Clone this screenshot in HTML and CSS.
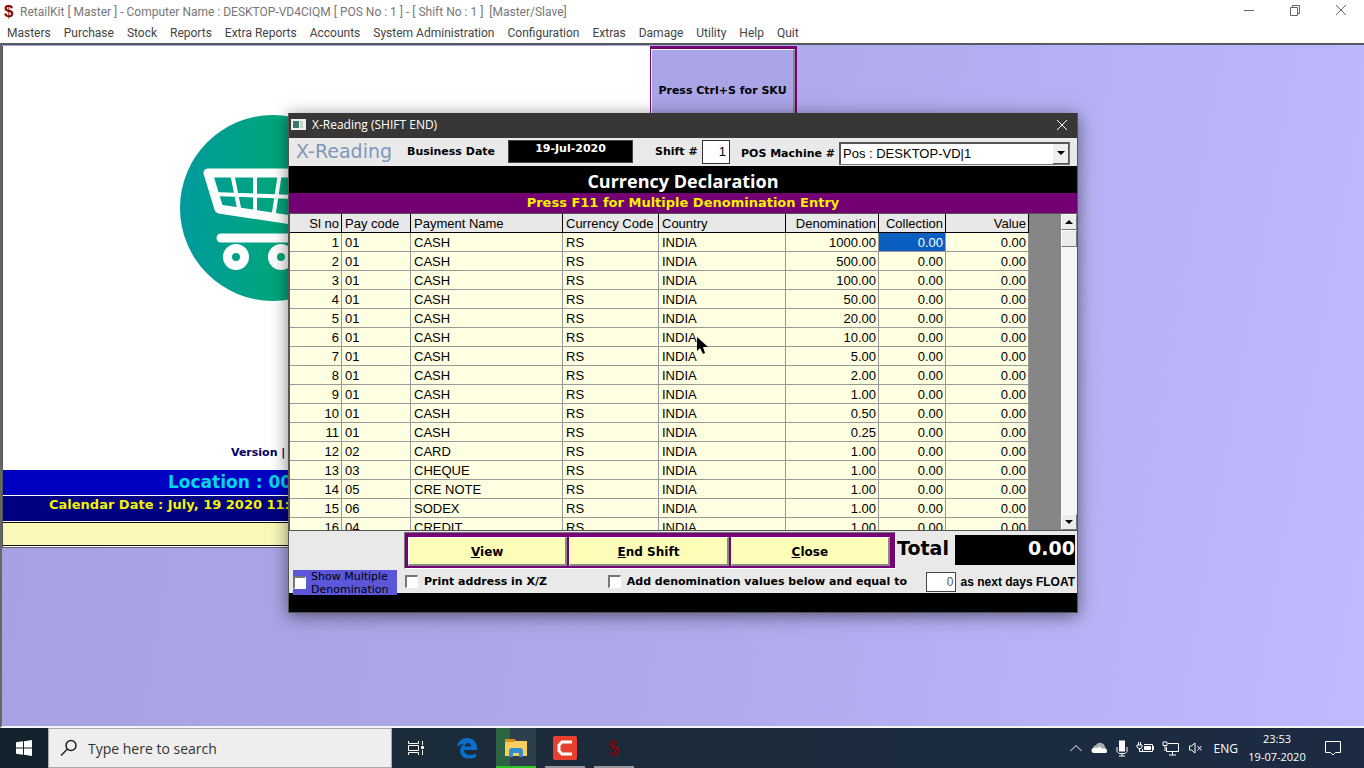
FILE: index.html
```
<!DOCTYPE html>
<html lang="en">
<head>
<meta charset="UTF-8">
<meta name="viewport" content="width=device-width, initial-scale=1.0">
<title>RetailKit</title>
<link rel="stylesheet" href="styles.css">
</head>
<body>
    <header class="app-title">
        <span class="app-icon">$</span>
        <span class="app-name">RetailKit [ Master ] - Computer Name : DESKTOP-VD4CIQM [ POS No : 1 ] - [ Shift No : 1 ]&nbsp; [Master/Slave]</span>
        <div class="window-buttons">
            <button type="button" aria-label="Minimize"><svg width="12" height="12" viewBox="0 0 12 12"><path d="M1 6.5h10"/></svg></button>
            <button type="button" aria-label="Restore"><svg width="12" height="12" viewBox="0 0 12 12"><path d="M1.500 3.500h7v8h-7zM3.500 3.500v-2h7v8h-2"/></svg></button>
            <button type="button" aria-label="Close"><svg width="12" height="12" viewBox="0 0 12 12"><path d="M1 1l10 10M11 1L1 11"/></svg></button>
        </div>
    </header>

    <nav class="menu">
        <a href="#">Masters</a>
        <a href="#">Purchase</a>
        <a href="#">Stock</a>
        <a href="#">Reports</a>
        <a href="#">Extra Reports</a>
        <a href="#">Accounts</a>
        <a href="#">System Administration</a>
        <a href="#">Configuration</a>
        <a href="#">Extras</a>
        <a href="#">Damage</a>
        <a href="#">Utility</a>
        <a href="#">Help</a>
        <a href="#">Quit</a>
    </nav>

    <main class="workspace">
        <div class="backdrop">
            <section class="splash">
                <div class="splash-logo">
                    <svg width="186" height="186" viewBox="0 0 186 186">
                        <defs>
                            <linearGradient id="disc" x1="0" x2="1" y1="0" y2="0">
                                <stop offset="0" stop-color="#009a9e"/>
                                <stop offset="0.5" stop-color="#00a57d"/>
                                <stop offset="1" stop-color="#00a878"/>
                            </linearGradient>
                        </defs>
                        <circle cx="93" cy="93" r="93" fill="url(#disc)"/>
                        <path d="M28 58h118l-8 51L39 94z" fill="none" stroke="#fff" stroke-width="9" stroke-linejoin="round"/>
                        <path d="M33 79l108 4M52 58l8 40M75 58v42M100 58l-7 46M124 58l-8 48" fill="none" stroke="#fff" stroke-width="4"/>
                        <path d="M41 123h90" stroke="#fff" stroke-width="9" stroke-linecap="round"/>
                        <g fill="none" stroke="#fff" stroke-width="9">
                            <circle cx="56" cy="142" r="8.500"/>
                            <circle cx="101" cy="142" r="8.500"/>
                        </g>
                    </svg>
                </div>
                <p class="version">Version |</p>
                <p class="location">Location : 00</p>
                <p class="calendar">Calendar Date : July, 19 2020 11:</p>
                <div class="notice"></div>
            </section>
            <div class="sku-panel">
                <button type="button" class="sku">Press Ctrl+S for SKU</button>
            </div>
        </div>

        <section class="dialog">
            <header class="dialog-title">
                <svg width="15" height="11" viewBox="0 0 15 11"><path fill="#eef1f1" d="M0 0h15v11H0z"/><path fill="#3a756e" d="M2 2h6v7H2z"/><path fill="#bcd3c4" d="M9 2h3v7H9z"/></svg>
                <h1>X-Reading (SHIFT END)</h1>
                <button type="button" aria-label="Close"><svg width="12" height="12" viewBox="0 0 12 12"><path d="M1 1l10 10M11 1L1 11"/></svg></button>
            </header>

            <div class="reading">
                <h2>X-Reading</h2>
                <span class="caption">Business Date</span>
                <output class="date">19-Jul-2020</output>
                <label class="caption" for="shift">Shift #</label>
                <input type="text" id="shift" value="1">
                <label class="caption pos-label" for="pos">POS Machine #</label>
                <div class="combo">
                    <select id="pos">
                        <option>Pos : DESKTOP-VD|1</option>
                    </select>
                    <span class="arrow down"></span>
                </div>
            </div>

            <h2 class="declaration">Currency Declaration</h2>
            <p class="hint">Press F11 for Multiple Denomination Entry</p>

            <div class="grid">
                <table>
                    <colgroup>
                        <col class="c-no"><col class="c-pay"><col class="c-name"><col class="c-cur"><col class="c-country"><col class="c-den"><col class="c-col"><col class="c-val">
                    </colgroup>
                    <thead>
                        <tr>
                            <th class="num">Sl no</th>
                            <th>Pay code</th>
                            <th>Payment Name</th>
                            <th>Currency Code</th>
                            <th>Country</th>
                            <th class="num">Denomination</th>
                            <th class="num">Collection</th>
                            <th class="num">Value</th>
                        </tr>
                    </thead>
                    <tbody id="rows"></tbody>
                </table>
                <div class="scrollbar">
                    <button type="button" aria-label="Scroll up"><span class="arrow up"></span></button>
                    <div class="thumb"></div>
                    <button type="button" class="scroll-end" aria-label="Scroll down"><span class="arrow down"></span></button>
                </div>
            </div>

            <div class="actions">
                <div class="buttons">
                    <button type="button"><u>V</u>iew</button>
                    <button type="button"><u>E</u>nd Shift</button>
                    <button type="button"><u>C</u>lose</button>
                </div>
                <span class="total-label">Total</span>
                <output class="total">0.00</output>
            </div>

            <div class="options">
                <label class="multiple"><input type="checkbox"><span>Show Multiple Denomination</span></label>
                <label class="check print"><input type="checkbox">Print address in X/Z</label>
                <label class="check"><input type="checkbox">Add denomination values below and equal to</label>
                <input type="text" id="float" value="0">
                <label class="float-label" for="float">as next days FLOAT</label>
            </div>
            <div class="status"></div>

            <svg class="pointer" width="12" height="19" viewBox="0 0 12 19"><path d="M0 0v14l3-3 3 6 2-1-2-6h5z"/></svg>
        </section>
    </main>

    <footer class="taskbar">
        <button type="button" class="start" aria-label="Start">
            <svg width="16" height="16" viewBox="0 0 16 16"><path fill="#fff" d="M0 2.300l7-1v6.300H0zM8 1.200L16 0v7.600H8zM0 8.500h7v6.300l-7-1zM8 8.500h8V16l-8-1.200z"/></svg>
        </button>
        <div class="search">
            <svg width="18" height="18" viewBox="0 0 18 18"><circle cx="11" cy="6.500" r="5" fill="none" stroke="#222" stroke-width="1.500"/><path d="M7.500 10L1 16.500" stroke="#222" stroke-width="1.500"/></svg>
            <input type="text" aria-label="Search" placeholder="Type here to search">
        </div>
        <button type="button" class="task" aria-label="Task view">
            <svg width="18" height="16" viewBox="0 0 18 16" fill="none" stroke="#fff"><path d="M1.500 1v2.500h10V1M1.500 15v-2.500h10V15M1.500 5.500h10v5h-10zM15.500 1v4M15.500 10v5"/><path fill="#fff" d="M14.500 6.500h2v2h-2z"/></svg>
        </button>
        <button type="button" class="task" aria-label="Edge">
            <svg width="22" height="22" viewBox="0 0 22 22"><path fill="#0a6dca" d="M1 10C2 4 6 1 11 1c6 0 10 4 10 10v2H8c0 3 3 5 6 5 2 0 4-.5 6-1.500V20c-2 1-4 1.500-7 1.500C7 21.500 4 18 4 14c0-3 1.500-5.500 4-7-3 0-5 1-7 3zM8.500 9.500H15C15 7 13.500 6 12 6S9 7 8.500 9.500z"/></svg>
        </button>
        <button type="button" class="task explorer" aria-label="File Explorer">
            <svg width="22" height="18" viewBox="0 0 22 18"><path fill="#f6cf5e" d="M0 2h22v15H0z"/><path fill="#d8921c" d="M0 0h9l2 1-2 2H0z"/><path fill="#2f8ed0" d="M4 18v-7l2-2h10l2 2v7h-4v-4H8v4z"/></svg>
        </button>
        <button type="button" class="task running" aria-label="Recorder">
            <svg width="24" height="24" viewBox="0 0 24 24"><rect width="24" height="24" rx="2" fill="#e8402f"/><path d="M19 6H9L6 9v6l3 3h10" fill="none" stroke="#fff" stroke-width="3"/></svg>
        </button>
        <button type="button" class="task running money" aria-label="RetailKit">$</button>

        <div class="tray">
            <svg width="14" height="14" viewBox="0 0 14 14" class="line"><path d="M1.500 10L7 4.500l5.500 5.500"/></svg>
            <svg width="17" height="14" viewBox="0 0 17 14"><path fill="#aab0b5" d="M2 9a4 4 0 0 1 3-5 5 5 0 0 1 9 2l2 3z"/><path fill="#fff" d="M3 12a2.500 2.500 0 0 1 0-5c1-.5 2 0 3 .2C8 5 10 6 11 8c3-1 5 0 5 2s-1 2-2 2z"/></svg>
            <svg width="12" height="17" viewBox="0 0 12 17" class="line"><rect x="3.500" y="1" width="5" height="10" fill="#fff"/><path d="M1 7v4.500l2 2h6l2-2V7M6 13v3M3 16h6"/></svg>
            <svg width="18" height="16" viewBox="0 0 18 16" class="line"><path d="M8 4.500h8.500v7h-10V9M17.500 6v4M1 5h5v2L5 8.500H3L1 7zM2.500 2v3M4.500 2v3M3.500 9v2.500h3"/><path fill="#fff" d="M8.500 6.500h6v3h-6z"/></svg>
            <svg width="18" height="16" viewBox="0 0 18 16" class="line"><path d="M6 3.500h10.500v8H4.500V7M10.500 12v3M7 15h7M1 2h4v3.500H1zM3 6v5"/></svg>
            <svg width="16" height="14" viewBox="0 0 16 14" class="line"><path d="M1.500 5v4h2L7 12V2L3.500 5zM9.500 5l4 4.500M13.500 5l-4 4.500"/></svg>
            <span class="lang">ENG</span>
            <div class="clock"><span>23:53</span><span>19-07-2020</span></div>
            <svg width="18" height="17" viewBox="0 0 18 17" class="line"><path d="M1.500 1.500h15v11h-5L9 15l-2.500-2.500h-5z"/></svg>
        </div>
    </footer>

    <script>
        var payments = [
            ['01', 'CASH', '1000.00'],
            ['01', 'CASH', '500.00'],
            ['01', 'CASH', '100.00'],
            ['01', 'CASH', '50.00'],
            ['01', 'CASH', '20.00'],
            ['01', 'CASH', '10.00'],
            ['01', 'CASH', '5.00'],
            ['01', 'CASH', '2.00'],
            ['01', 'CASH', '1.00'],
            ['01', 'CASH', '0.50'],
            ['01', 'CASH', '0.25'],
            ['02', 'CARD', '1.00'],
            ['03', 'CHEQUE', '1.00'],
            ['05', 'CRE NOTE', '1.00'],
            ['06', 'SODEX', '1.00'],
            ['04', 'CREDIT', '1.00']
        ];

        var rows = document.getElementById('rows');
        payments.forEach(function(p, i) {
            var tr = document.createElement('tr');
            tr.innerHTML = `
                <td class="num">${i + 1}</td>
                <td>${p[0]}</td>
                <td>${p[1]}</td>
                <td>RS</td>
                <td>INDIA</td>
                <td class="num">${p[2]}</td>
                <td class="num${i === 0 ? ' selected' : ''}">0.00</td>
                <td class="num">0.00</td>
            `;
            rows.appendChild(tr);
        });
    </script>
</body>
</html>
```
FILE: styles.css
```
* {
    box-sizing: border-box;
}
body {
    margin: 0;
    height: 100vh;
    display: flex;
    flex-direction: column;
    overflow: hidden;
    font-family: "Open Sans", "Noto Sans", sans-serif;
    font-size: 12px;
    color: #000;
    background: #fff;
}
h1, h2, p {
    margin: 0;
    font-weight: normal;
}
button {
    padding: 0;
    border: none;
    background: none;
    font: inherit;
    color: inherit;
}
input, select {
    margin: 0;
    font: inherit;
    color: inherit;
}
svg {
    display: block;
    flex: none;
}

/* main window */
.app-title {
    display: flex;
    align-items: center;
    height: 24px;
    padding-left: 4px;
    color: #777;
    font-family: Roboto, "Open Sans", sans-serif;
}
.app-icon {
    width: 16px;
    font: bold 17px/20px "Liberation Sans", sans-serif;
    color: #7b0a0a;
}
.app-name {
    flex: 1;
    white-space: nowrap;
}
.window-buttons {
    display: flex;
    gap: 34px;
    padding: 0 17px 4px 0;
}
.window-buttons path {
    fill: none;
    stroke: #666;
}
.menu {
    display: flex;
    gap: 13px;
    height: 19px;
    padding-left: 7px;
    font-family: Roboto, "Open Sans", sans-serif;
    line-height: 18px;
}
.menu a {
    color: #444;
    text-decoration: none;
    white-space: nowrap;
}
.workspace {
    flex: 1;
    position: relative;
    min-height: 0;
    border-top: 2px solid #555a5c;
    border-left: 2px solid #666;
    border-bottom: 2px solid #f4f4f4;
    background: linear-gradient(100deg, #a5a0e2 0%, #aeaaec 55%, #bfbaff 100%);
}
.backdrop {
    display: flex;
    align-items: flex-start;
    padding-top: 1px;
}

/* splash panel behind the dialog */
.splash {
    width: 648px;
    background: #fff;
    border-left: 1px solid #555;
    border-bottom: 1px solid #666;
    font-family: "DejaVu Sans", sans-serif;
    white-space: nowrap;
}
.splash p {
    font-weight: bold;
}
.splash-logo {
    padding: 69px 0 0 177px;
    height: 396px;
}
.version {
    height: 28px;
    padding-left: 228px;
    font-size: 11px;
    line-height: 22px;
    color: #000060;
}
.location {
    height: 26px;
    padding-left: 165px;
    border-bottom: 1px solid #fff;
    font-size: 17px;
    line-height: 25px;
    color: #00d8e8;
    background: #0000c0;
}
.calendar {
    height: 26px;
    padding-left: 46px;
    border-bottom: 1px solid #fff;
    font-size: 13px;
    line-height: 18px;
    color: #f4f400;
    background: #000080;
}
.notice {
    height: 24px;
    margin-bottom: 1px;
    border-top: 1px solid #111;
    border-bottom: 1px solid #111;
    background: #f9f8b8;
}
.sku-panel {
    width: 147px;
    height: 90px;
    padding: 3px 2px 2px 1px;
    background: #770077;
}
.sku {
    width: 100%;
    height: 100%;
    border: 1px solid #fff;
    border-right: 2px solid #888;
    border-bottom: 2px solid #888;
    background: #a9a5e6;
    font: bold 11px/14px "DejaVu Sans", sans-serif;
    white-space: nowrap;
}

/* dialog window */
.dialog {
    position: absolute;
    top: 68px;
    left: 0;
    right: 0;
    width: 790px;
    margin: 0 auto;
    border: 1px solid #555;
    border-top: none;
    background: #e9e9e9;
    box-shadow: 0 3px 16px rgba(0, 0, 0, 0.5);
    font-family: "DejaVu Sans", sans-serif;
}
.dialog-title {
    display: flex;
    align-items: center;
    gap: 6px;
    height: 25px;
    padding: 0 9px 2px 2px;
    background: #393735;
    color: #fff;
    font-family: "Open Sans", sans-serif;
}
.dialog-title h1 {
    flex: 1;
    font-size: 12px;
}
.dialog-title path {
    stroke-width: 1;
}
.dialog-title button path {
    stroke: #fff;
}
.reading {
    display: grid;
    grid-template-columns: 111px 101px 147px 47px 39px 98px 1fr;
    align-items: center;
    height: 28px;
    padding: 0 7px 1px;
}
.reading h2 {
    margin-bottom: 2px;
    font-size: 19px;
    line-height: 24px;
    color: #7f97b8;
}
.caption {
    font-size: 11px;
    font-weight: bold;
    white-space: nowrap;
}
.pos-label {
    padding-top: 3px;
}
.date {
    width: 125px;
    height: 23px;
    border: 1px solid #444;
    background: #000;
    color: #fff;
    font-size: 11px;
    font-weight: bold;
    line-height: 15px;
    text-align: center;
}
#shift {
    width: 28px;
    height: 24px;
    padding: 0 3px;
    border: 1px solid #333;
    background: #fff;
    font: 13px/16px "Liberation Sans", sans-serif;
    text-align: right;
}
.combo {
    display: flex;
    height: 23px;
    margin-top: 3px;
    border: 1px solid #777;
    border-top: 2px solid #555;
    border-left: 2px solid #555;
    background: #fff;
}
.combo select {
    flex: 1;
    appearance: none;
    border: none;
    padding: 0 2px;
    background: #fff;
    font: 13px/18px "Liberation Sans", sans-serif;
}
.combo .arrow {
    width: 16px;
    border-right: 1px solid #555;
    border-bottom: 1px solid #555;
    background: #eee;
}
.arrow {
    display: flex;
    align-items: center;
    justify-content: center;
}
.arrow::after {
    content: "";
    border: 4px solid transparent;
}
.arrow.down::after {
    border-top-color: #000;
    border-bottom: none;
}
.arrow.up::after {
    border-bottom-color: #000;
    border-top: none;
}
.declaration {
    height: 27px;
    padding-top: 2px;
    background: #000;
    color: #fff;
    font: bold 18px/26px "Comic Sans MS", "Open Sans", sans-serif;
    text-align: center;
}
.hint {
    height: 20px;
    background: #720072;
    color: #f6f000;
    font-size: 13px;
    font-weight: bold;
    line-height: 19px;
    text-align: center;
}

/* denomination grid */
.grid {
    display: flex;
    justify-content: space-between;
    height: 318px;
    overflow: hidden;
    border: 1px solid #555;
    border-right: none;
    background: #868686;
}
.grid table {
    width: 739px;
    table-layout: fixed;
    border-collapse: separate;
    border-spacing: 0;
    font: 13px/16px "Liberation Sans", sans-serif;
    align-self: flex-start;
}
.c-no { width: 52px; }
.c-pay { width: 69px; }
.c-name { width: 152px; }
.c-cur { width: 96px; }
.c-country { width: 127px; }
.c-den { width: 93px; }
.c-col { width: 67px; }
.c-val { width: 83px; }
.grid th {
    height: 19px;
    padding: 2px 2px 0 3px;
    border-right: 1px solid #000;
    border-bottom: 1px solid #000;
    background: #e8e8e8;
    font-weight: normal;
    text-align: left;
    white-space: nowrap;
}
.grid td {
    height: 19px;
    padding: 2px 2px 0 3px;
    border-right: 1px solid #999;
    border-bottom: 1px solid #999;
    background: #ffffe1;
}
.grid .num {
    padding: 2px 2px 0 0;
    text-align: right;
}
.grid td.selected {
    background: #0a5fc0;
    color: #fff;
}
.scrollbar {
    display: flex;
    flex-direction: column;
    width: 16px;
    background: #f6f6f6;
}
.scrollbar button, .thumb {
    height: 16px;
    border: 1px solid #fff;
    border-right-color: #777;
    border-bottom-color: #777;
    background: #ececec;
}
.scrollbar button {
    display: flex;
    align-items: center;
    justify-content: center;
}
.thumb {
    height: 17px;
}
.scrollbar .scroll-end {
    margin-top: auto;
}

/* buttons and total */
.actions {
    display: flex;
    height: 39px;
    padding: 1px 2px 0 115px;
}
.buttons {
    display: flex;
    gap: 2px;
    width: 492px;
    height: 37px;
    padding: 4px 5px 2px 3px;
    border: 1px solid #777;
    border-right-color: #fff;
    border-bottom-color: #fff;
    background: #770077;
}
.buttons button {
    flex: 1;
    padding-top: 2px;
    border: 1px solid #fff;
    border-right: 2px solid #888;
    border-bottom: 2px solid #888;
    background: #fffdb8;
    font-size: 12px;
    font-weight: bold;
}
.total-label {
    padding: 3px 6px 0 1px;
    font-size: 19px;
    font-weight: bold;
    line-height: 26px;
}
.total {
    flex: 1;
    height: 30px;
    margin-top: 3px;
    background: #000;
    color: #fff;
    font-size: 19px;
    font-weight: bold;
    line-height: 26px;
    text-align: right;
}
.options {
    display: flex;
    align-items: center;
    height: 23px;
    padding: 0 2px 0 4px;
    font-size: 11px;
    font-weight: bold;
    white-space: nowrap;
}
.options input[type="checkbox"] {
    appearance: none;
    flex: none;
    width: 13px;
    height: 13px;
    border: 1px solid #fff;
    border-top: 2px solid #777;
    border-left: 2px solid #777;
    background: #fff;
}
.multiple {
    display: flex;
    align-items: center;
    gap: 5px;
    align-self: flex-start;
    position: relative;
    z-index: 1;
    width: 104px;
    height: 25px;
    margin-right: 8px;
    background: #5b57d8;
    font-weight: normal;
    line-height: 13px;
    white-space: normal;
}
.check {
    display: flex;
    align-items: center;
    gap: 6px;
    width: 318px;
}
.check.print {
    width: 203px;
}
#float {
    width: 30px;
    height: 20px;
    margin-right: 5px;
    padding: 0 1px;
    border: 1px solid #444;
    background: #fff;
    color: #555;
    font: 12px/16px "Liberation Sans", sans-serif;
    text-align: right;
}
.float-label {
    font: bold 12px/16px "Liberation Sans", sans-serif;
}
.status {
    height: 19px;
    background: #000;
}
.pointer {
    position: absolute;
    left: 408px;
    top: 224px;
}

/* windows taskbar */
.taskbar {
    display: flex;
    height: 40px;
    background: linear-gradient(90deg, #1a2b35, #1c2b42);
    color: #fff;
}
.start {
    display: flex;
    align-items: center;
    justify-content: center;
    width: 48px;
    background: #13232d;
}
.search {
    display: flex;
    align-items: center;
    gap: 10px;
    width: 344px;
    padding-left: 11px;
    border: 1px solid #aaa;
    background: #eee;
}
.search input {
    flex: 1;
    border: none;
    background: none;
    padding: 0;
    font-size: 14px;
}
.search input::placeholder {
    color: #333;
}
.task {
    display: flex;
    align-items: center;
    justify-content: center;
    width: 40px;
    margin-left: 9px;
    border-bottom: 2px solid transparent;
    border-top: 2px solid transparent;
}
.search + .task {
    margin-left: 4px;
    margin-right: 2px;
}
.explorer {
    background: linear-gradient(90deg, #2c6541 14px, #2d3f4c 14px);
    border-bottom-color: #2bc41e;
}
.running {
    border-bottom-color: #9a999c;
}
.money {
    color: #8c0000;
    font: 22px/24px "Liberation Serif", serif;
}
.tray {
    display: flex;
    align-items: center;
    gap: 8px;
    margin-left: auto;
    padding-right: 22px;
}
.line {
    fill: none;
    stroke: #fff;
}
.lang {
    margin-left: 2px;
}
.clock {
    display: flex;
    flex-direction: column;
    align-items: center;
    width: 62px;
    margin-right: 8px;
    font-size: 11px;
    line-height: 18px;
}
```
